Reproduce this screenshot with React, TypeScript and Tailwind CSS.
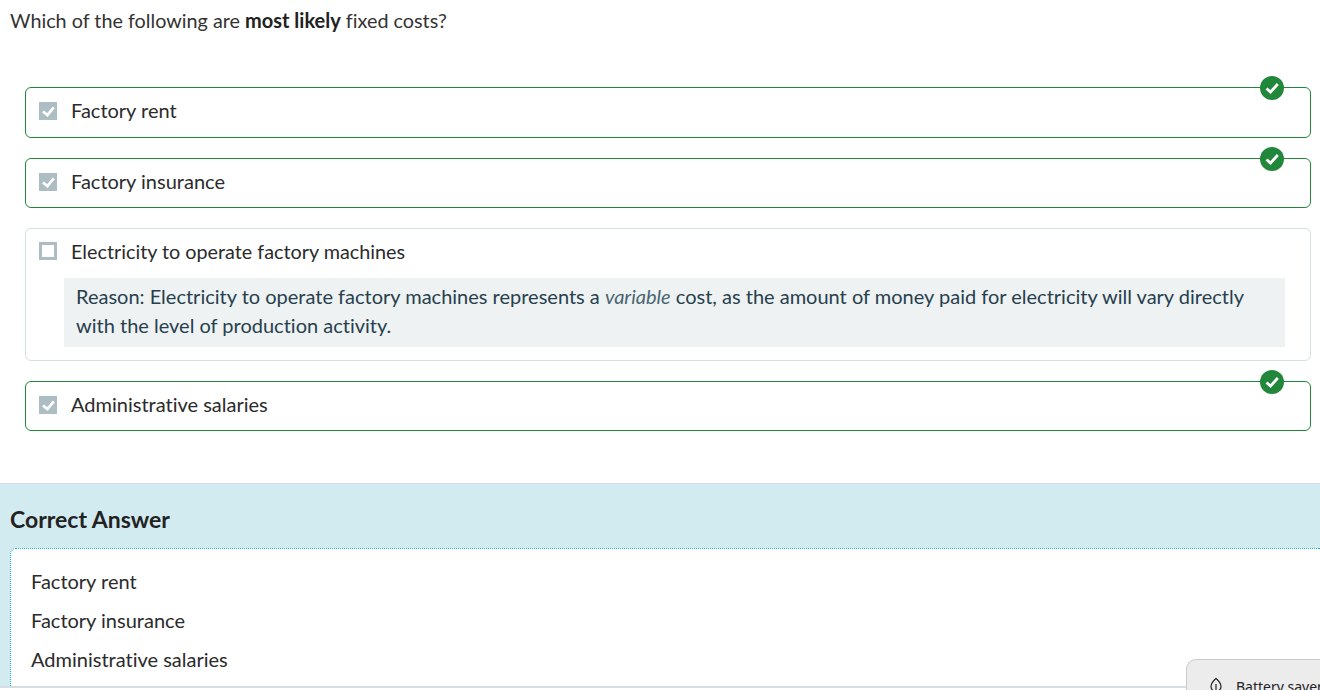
import type { ReactNode } from "react";

function CheckBox({ checked }: { checked: boolean }) {
  if (!checked) {
    return <span className="block h-[18px] w-[18px] shrink-0 border-[3px] border-[#adbdc4] bg-white" />;
  }
  return (
    <span className="flex h-[18px] w-[18px] shrink-0 items-center justify-center bg-[#adbdc4]">
      <svg viewBox="0 0 18 18" className="h-[18px] w-[18px]" fill="none">
        <path d="M4 9.5l4.4 3.6L14.8 5.4" stroke="#fff" strokeWidth="2.8" />
      </svg>
    </span>
  );
}

function CorrectBadge() {
  return (
    <span className="absolute right-[26px] top-[-12px] flex h-[24px] w-[24px] items-center justify-center rounded-full bg-[#21873a]">
      <svg viewBox="0 0 24 24" className="h-[24px] w-[24px]" fill="none">
        <path d="M6.5 12.5l4 3.5 7.3-8" stroke="#fff" strokeWidth="2.8" />
      </svg>
    </span>
  );
}

function Choice({ label, heightClass }: { label: string; heightClass: string }) {
  return (
    <div className={`relative flex items-start rounded-[6px] border border-[#21873a] bg-white pl-[13px] pt-[10px] ${heightClass}`}>
      <span className="mt-[4px]">
        <CheckBox checked />
      </span>
      <span className="ml-[14px] text-[20px] leading-[24px] text-[#2b2b2b]">{label}</span>
      <CorrectBadge />
    </div>
  );
}

function AnswerLine({ children }: { children: ReactNode }) {
  return <p className="h-[39px] text-[20px] leading-[24px] text-[#2b2b2b]">{children}</p>;
}

export default function App() {
  return (
    <div className="relative h-[690px] overflow-hidden bg-white font-['Lato',sans-serif] [font-variant-ligatures:none]">
      <p className="h-[32px] px-[10px] pt-[8px] text-[19.8px] leading-[24px] text-[#333]">
        Which of the following are <b className="text-[20px] font-bold text-[#222]">most likely</b> fixed costs?
      </p>

      <div className="ml-[25px] mr-[9px] mt-[55px] flex flex-col gap-[20px]">
        <Choice label="Factory rent" heightClass="h-[51px]" />
        <Choice label="Factory insurance" heightClass="h-[50px]" />

        <div className="rounded-[6px] border border-[#d5dfe2] bg-white pb-[13px] pl-[13px] pr-[25px] pt-[10px]">
          <div className="flex items-start">
            <span className="mt-[3px]">
              <CheckBox checked={false} />
            </span>
            <span className="ml-[14px] text-[19.8px] leading-[24px] text-[#2b2b2b]">
              Electricity to operate factory machines
            </span>
          </div>
          <div className="ml-[25px] mt-[15px] h-[69px] bg-[#eef2f3] px-[12px] pt-[4px] text-[20px] leading-[29px] text-[#27404d]">
            Reason: Electricity to operate factory machines represents a <i className="text-[#4a6572]">variable</i> cost, as the amount of money paid for electricity will vary directly with the level of production activity.
          </div>
        </div>

        <Choice label="Administrative salaries" heightClass="h-[50px]" />
      </div>

      <section className="mt-[52px] border-t border-[#d5dfe2] bg-[#d2ebf1] pl-[10px] pt-[22px]">
        <h2 className="text-[23px] font-bold leading-[26px] text-[#222]">Correct Answer</h2>
        <div className="mt-[16px] h-[139px] rounded-tl-[6px] border-l border-t border-dotted border-[#0fb5c9] bg-white pl-[20px] pt-[20px]">
          <AnswerLine>Factory rent</AnswerLine>
          <AnswerLine>Factory insurance</AnswerLine>
          <AnswerLine>Administrative salaries</AnswerLine>
        </div>
      </section>

      <div className="absolute inset-x-0 top-[686px] h-[2px] bg-[#d5dfe2]" />

      <div className="absolute left-[1186px] top-[659px] flex h-[60px] w-[200px] items-start rounded-tl-[10px] border border-[#c9c9c9] bg-[#ececec] pl-[21px] pt-[17px]">
        <svg viewBox="0 0 16 18" className="h-[18px] w-[16px]" fill="none" stroke="#222" strokeWidth="1.2">
          <path d="M8 1.5C5 4 3 6.5 3 9.5a5 5 0 0 0 10 0C13 6.5 11 4 8 1.5z" />
          <path d="M8 7v10" />
        </svg>
        <span className="ml-[12px] whitespace-nowrap font-['Noto_Sans',sans-serif] text-[14px] leading-[20px] text-[#222]">
          Battery saver
        </span>
      </div>
    </div>
  );
}
